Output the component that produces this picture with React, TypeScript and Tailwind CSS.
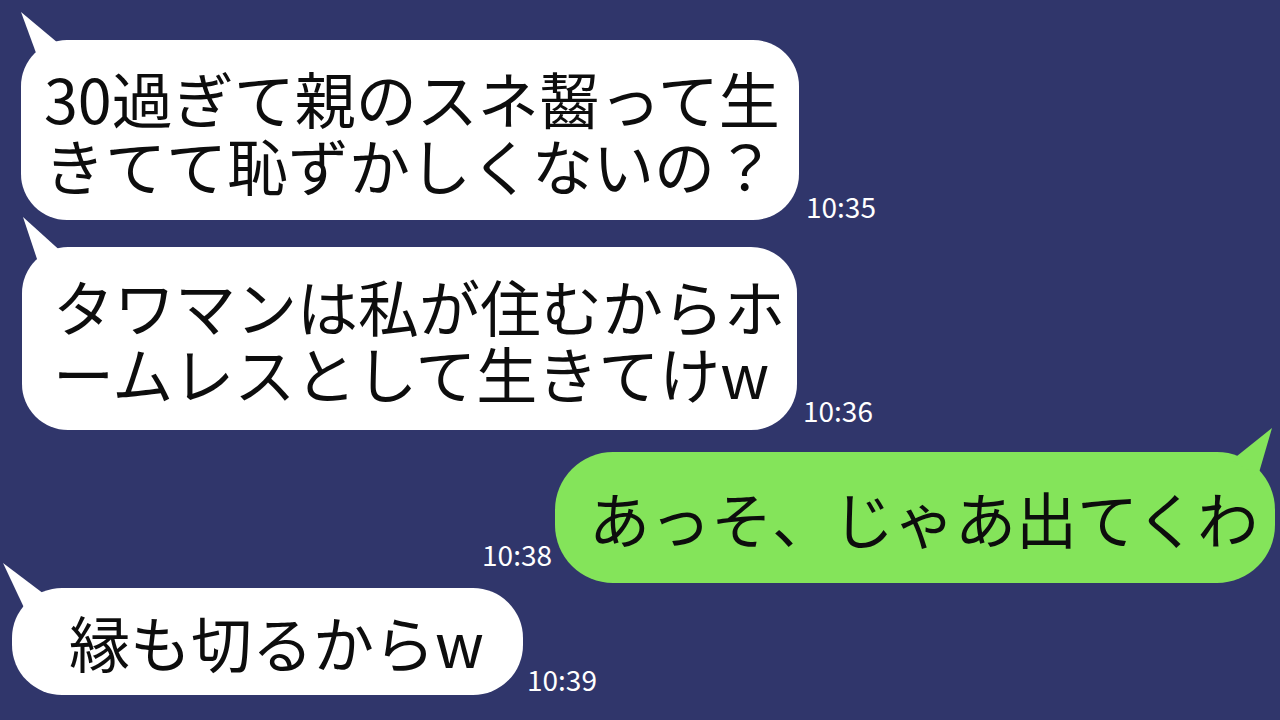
import React from "react";

const jp = { fontFamily: '"Noto Sans CJK JP", "Noto Sans", sans-serif' };

function TailLeft({ tip, a, b, color }: { tip: [number, number]; a: [number, number]; b: [number, number]; color: string }) {
  return (
    <svg className="absolute left-0 top-0 overflow-visible" width="1" height="1" style={{ overflow: "visible" }}>
      <polygon points={`${tip[0]},${tip[1]} ${a[0]},${a[1]} ${b[0]},${b[1]}`} fill={color} />
    </svg>
  );
}

function TailRight({ tip, a, b, color }: { tip: [number, number]; a: [number, number]; b: [number, number]; color: string }) {
  return (
    <svg className="absolute right-0 top-0 overflow-visible" width="1" height="1" style={{ overflow: "visible" }}>
      <polygon points={`${tip[0]},${tip[1]} ${a[0]},${a[1]} ${b[0]},${b[1]}`} fill={color} />
    </svg>
  );
}

function Time({ t, className }: { t: string; className?: string }) {
  return (
    <div className={`text-white text-[28px] leading-none whitespace-nowrap ${className ?? ""}`} style={jp}>
      {t}
    </div>
  );
}

export default function App() {
  return (
    <div className="w-[1280px] h-[720px] bg-[#30366b] overflow-hidden flex flex-col pt-[40px]" style={jp}>
      {/* Row 1 */}
      <div className="flex items-end pl-[21px]">
        <div className="relative w-[778px] h-[180px] bg-white rounded-[46px] flex flex-col justify-center pl-[23px] pt-[2px] text-[61px] leading-[67px] text-[#0d0d0d] whitespace-nowrap">
          <TailLeft tip={[0, -28]} a={[43, 8]} b={[18, 21]} color="#ffffff" />
          <div>30過ぎて親のスネ齧って生</div>
          <div>きてて恥ずかしくないの？</div>
        </div>
        <Time t="10:35" className="ml-[7px] mb-[0px]" />
      </div>

      {/* Row 2 */}
      <div className="flex items-end pl-[22px] mt-[27px]">
        <div className="relative w-[775px] h-[183px] bg-white rounded-[46px] flex flex-col justify-center pl-[31px] text-[61px] leading-[67px] text-[#0d0d0d] whitespace-nowrap">
          <TailLeft tip={[1, -30]} a={[43, 8]} b={[18, 21]} color="#ffffff" />
          <div>タワマンは私が住むからホ</div>
          <div>ームレスとして生きてけw</div>
        </div>
        <Time t="10:36" className="ml-[6px] mb-[6px]" />
      </div>

      {/* Row 3 */}
      <div className="flex items-end justify-end pr-[5px] mt-[22px]">
        <Time t="10:38" className="mr-[3px] mb-[15px]" />
        <div className="relative w-[720px] h-[131px] bg-[#84e45a] rounded-[58px] flex items-center pl-[34px] text-[61px] leading-[67px] text-[#0d0d0d] whitespace-nowrap">
          <TailRight tip={[-2, -24]} a={[-42, 8]} b={[-16, 24]} color="#84e45a" />
          <div>あっそ、じゃあ出てくわ</div>
        </div>
      </div>

      {/* Row 4 */}
      <div className="flex items-end pl-[12px] mt-[5px]">
        <div className="relative w-[511px] h-[107px] bg-white rounded-[50px] flex items-center pl-[57px] text-[61px] leading-[67px] text-[#0d0d0d] whitespace-nowrap">
          <TailLeft tip={[-9, -25]} a={[36, 9]} b={[15, 26]} color="#ffffff" />
          <div>縁も切るからw</div>
        </div>
        <Time t="10:39" className="ml-[4px] mb-[2px]" />
      </div>
    </div>
  );
}
